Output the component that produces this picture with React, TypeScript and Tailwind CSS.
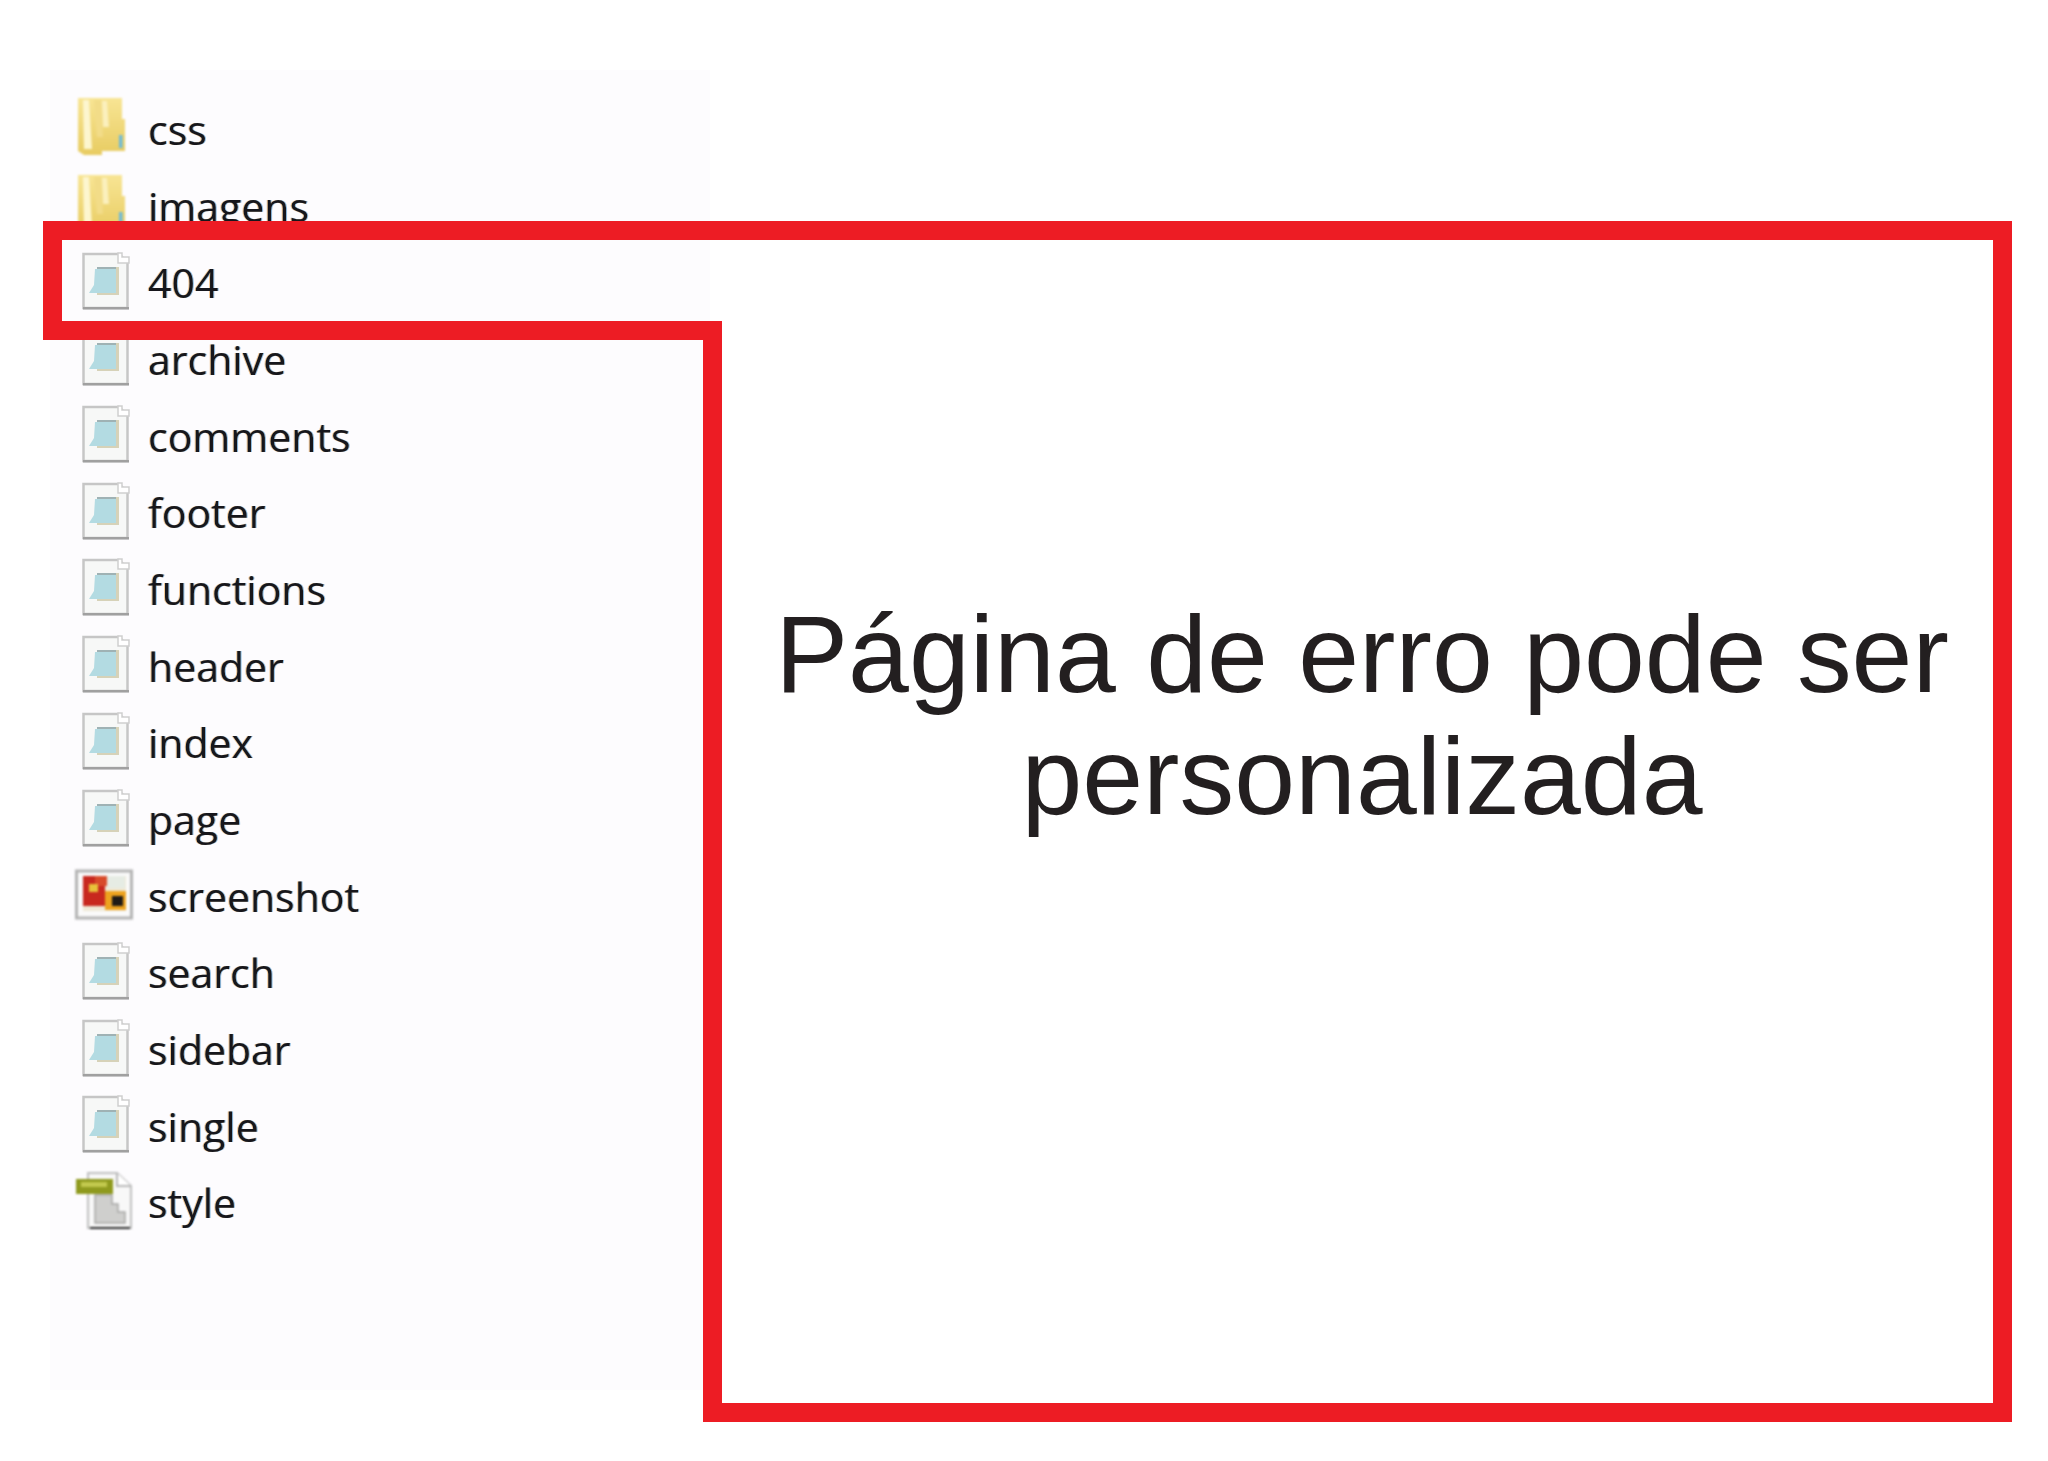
const files = [
  { name: "css", kind: "folder" },
  { name: "imagens", kind: "folder" },
  { name: "404", kind: "doc" },
  { name: "archive", kind: "doc" },
  { name: "comments", kind: "doc" },
  { name: "footer", kind: "doc" },
  { name: "functions", kind: "doc" },
  { name: "header", kind: "doc" },
  { name: "index", kind: "doc" },
  { name: "page", kind: "doc" },
  { name: "screenshot", kind: "image" },
  { name: "search", kind: "doc" },
  { name: "sidebar", kind: "doc" },
  { name: "single", kind: "doc" },
  { name: "style", kind: "css" },
];

function FileIcon({ kind }: { kind: string }) {
  if (kind === "folder") {
    return (
      <svg viewBox="0 0 60 60" className="w-[60px] h-[60px] shrink-0 blur-[0.8px]">
        <defs>
          <linearGradient id="folderFill" x1="0" y1="0" x2="0" y2="1">
            <stop offset="0" stopColor="#f8e594" />
            <stop offset="1" stopColor="#e8cc62" />
          </linearGradient>
        </defs>
        <path d="M3 1 H47 V22 H50 V54 H27 V58 H9 L3 54 Z" fill="url(#folderFill)" />
        <path d="M8 3 H14 L17 52 H9 Z" fill="#fdf6cf" />
        <path d="M19 3 H26 L28 40 H22 Z" fill="#f2dc88" />
        <path d="M27 4 H32 L34 30 H28 Z" fill="#fbf0bd" />
        <rect x="44" y="38" width="3.5" height="13" fill="#6fbbd8" />
      </svg>
    );
  }
  if (kind === "image") {
    return (
      <svg viewBox="0 0 60 60" className="w-[60px] h-[60px] shrink-0 blur-[0.8px]">
        <rect x="1.5" y="7" width="55" height="47" fill="#fafafa" stroke="#b4b4b4" strokeWidth="3" />
        <rect x="8" y="12" width="43" height="35" fill="#efe9d6" />
        <rect x="8" y="12" width="22" height="30" fill="#c8281e" />
        <rect x="20" y="12" width="12" height="10" fill="#d84a2a" />
        <rect x="14" y="20" width="9" height="8" fill="#e8c23a" />
        <rect x="30" y="27" width="21" height="19" fill="#eda21e" />
        <rect x="37" y="32" width="11" height="10" fill="#1e1a16" />
        <rect x="32" y="12" width="18" height="12" fill="#e6ece4" />
      </svg>
    );
  }
  if (kind === "css") {
    return (
      <svg viewBox="0 0 60 60" className="w-[60px] h-[60px] shrink-0 blur-[0.8px]">
        <path d="M13 2 H42 L56 15 V57 H13 Z" fill="#f8f8f8" stroke="#c0c0c0" strokeWidth="2" />
        <path d="M42 2 V15 H56" fill="#ffffff" stroke="#b8b8b8" strokeWidth="2" />
        <path d="M20 24 H37 V33 H43 V41 H50 V52 H20 Z" fill="#cfcfcd" stroke="#a8a8a6" strokeWidth="1.5" />
        <rect x="15" y="56" width="40" height="2" fill="#2a2a2a" />
        <rect x="1" y="8" width="37" height="15" fill="#8f9a1e" />
        <rect x="6" y="11" width="26" height="5" fill="#c2c94e" />
      </svg>
    );
  }
  return (
    <svg viewBox="0 0 60 60" className="w-[60px] h-[60px] shrink-0 blur-[0.7px]">
      <path d="M8.5 3 H44 L52.5 11 V57 H8.5 Z" fill="#f7f8f7" stroke="#c6c6c6" strokeWidth="2.5" />
      <path d="M8 56 H54 V58.5 H8 Z" fill="#a0a0a0" />
      <path d="M43 2 H47 V6 H54 V12 H43 Z" fill="#ffffff" stroke="#cfcfcf" strokeWidth="1.5" />
      <rect x="22" y="16" width="22" height="28" fill="#d6d2b8" />
      <rect x="22" y="16" width="19" height="3" fill="#9fb2b4" />
      <path d="M20 18 H41 V42 H14 L19 34 Z" fill="#b3dbe2" />
    </svg>
  );
}

function FileRow({ name, kind }: { name: string; kind: string }) {
  return (
    <div className="flex items-center gap-[13px] h-[76.7px]">
      <FileIcon kind={kind} />
      <span className="pt-[4px] font-['Open_Sans',sans-serif] font-medium text-[41px] leading-none text-[#16161c] blur-[0.6px] [text-shadow:-1px_0_0_rgba(230,150,50,0.5),1px_0_0_rgba(40,130,200,0.5)]">
        {name}
      </span>
    </div>
  );
}

export default function App() {
  return (
    <div className="relative flex w-[2048px] h-[1461px] overflow-hidden bg-white">
      <div className="w-[660px] h-[1320px] mt-[70px] ml-[50px] pt-[19px] pl-[25px] bg-[#fdfcfe] shrink-0">
        {files.map((f) => (
          <FileRow key={f.name} name={f.name} kind={f.kind} />
        ))}
      </div>

      {/* main note on the right */}
      <div className="flex-1 pt-[593px] pr-[34px]">
        <p className="font-['Liberation_Sans',sans-serif] text-[109.4px] leading-[122px] text-[#231f20] text-center">
          Página de erro pode ser personalizada
        </p>
      </div>

      {/* red annotation outline */}
      <svg viewBox="0 0 2048 1461" className="absolute inset-0 w-[2048px] h-[1461px]">
        <path
          d="M43 221 H2012 V1422 H703 V340 H43 Z M62 240 V321 H722 V1403 H1993 V240 Z"
          fill="#ed1c24"
          fillRule="evenodd"
        />
      </svg>
    </div>
  );
}
